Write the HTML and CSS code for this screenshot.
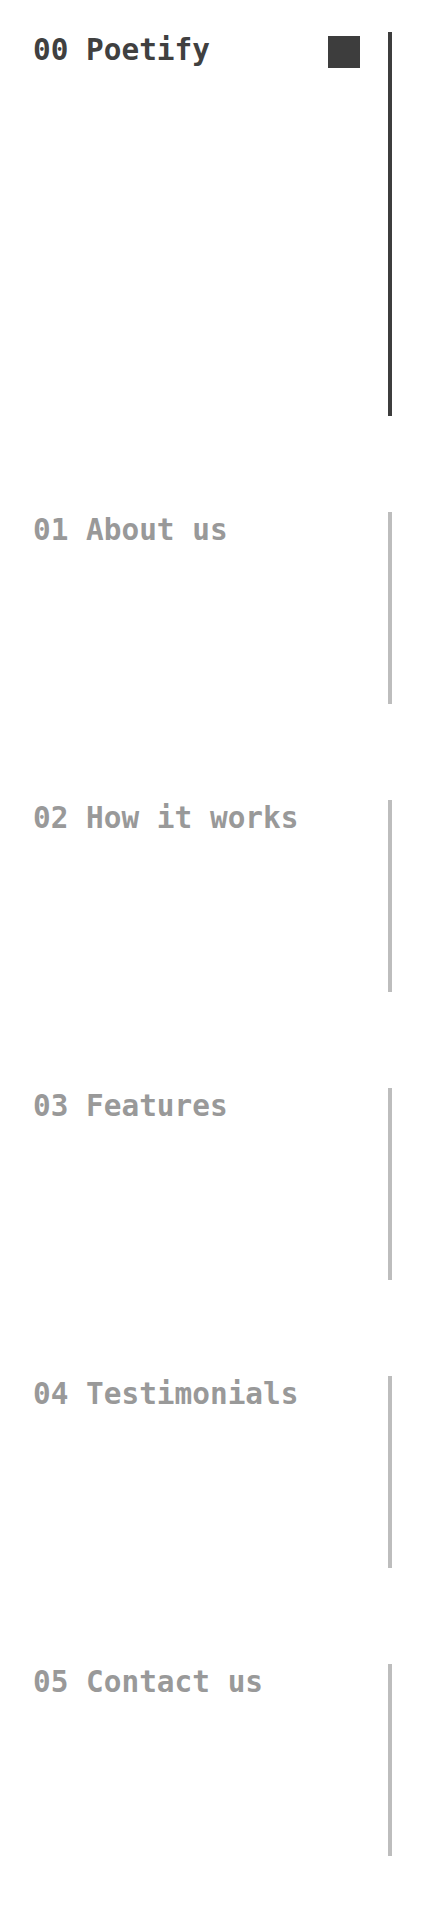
FILE: index.html
```html
<!DOCTYPE html>
<html lang="en">
<head>
<meta charset="utf-8">
<title>Poetify</title>
<link rel="stylesheet" href="styles.css">
</head>
<body>
<nav class="toc">
  <a class="toc-item is-active" href="#poetify">
    <span class="toc-label">00 Poetify</span>
    <span class="toc-marker"></span>
  </a>
  <a class="toc-item" href="#about">
    <span class="toc-label">01 About us</span>
  </a>
  <a class="toc-item" href="#how">
    <span class="toc-label">02 How it works</span>
  </a>
  <a class="toc-item" href="#features">
    <span class="toc-label">03 Features</span>
  </a>
  <a class="toc-item" href="#testimonials">
    <span class="toc-label">04 Testimonials</span>
  </a>
  <a class="toc-item" href="#contact">
    <span class="toc-label">05 Contact us</span>
  </a>
</nav>
</body>
</html>
```

FILE: styles.css
```css
html, body {
  margin: 0;
  background: #ffffff;
}

.toc {
  display: flex;
  flex-direction: column;
  gap: 96px;
  padding: 32px 32px 64px 33px;
  font-family: "DejaVu Sans Mono", "Liberation Mono", monospace;
}

.toc-item {
  display: flex;
  align-items: flex-start;
  height: 192px;
  border-right: 4px solid #bdbdbd;
  color: #999999;
  text-decoration: none;
}

.toc-item.is-active {
  height: 384px;
  border-right-color: #3d3d3d;
  color: #404040;
}

.toc-label {
  flex: 1;
  padding-top: 1px;
  font-size: 29.4px;
  line-height: 1.2;
  font-weight: 700;
  white-space: nowrap;
}

.toc-marker {
  width: 32px;
  height: 32px;
  margin-top: 4px;
  margin-right: 28px;
  background: #3d3d3d;
}
```
